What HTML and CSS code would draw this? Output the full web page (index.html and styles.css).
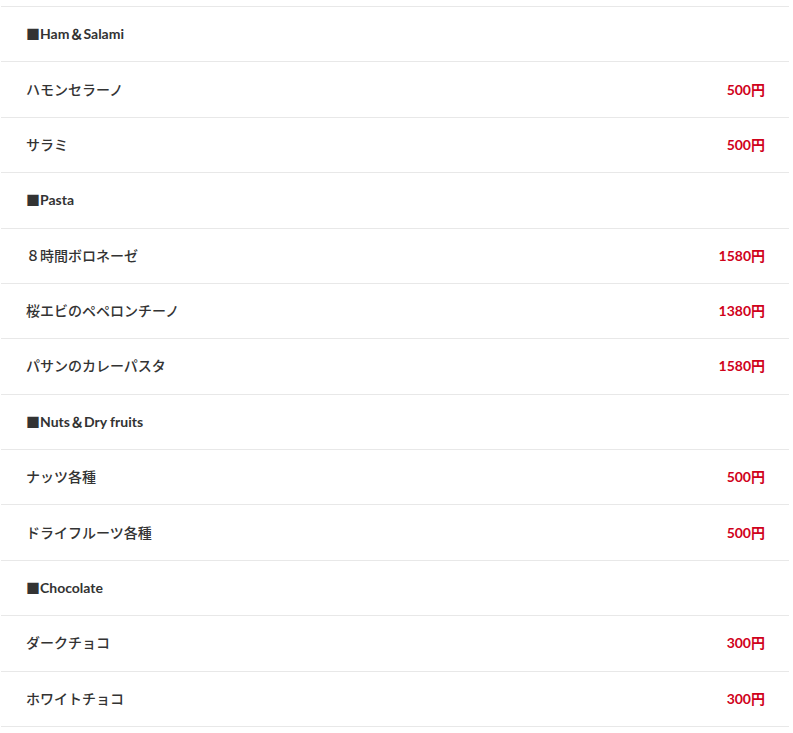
FILE: index.html
```html
<!DOCTYPE html>
<html lang="ja">
<head>
<meta charset="utf-8">
<link rel="stylesheet" href="styles.css">
</head>
<body>
<div class="menu">
  <div class="row head">■Ham＆Salami</div>
  <div class="row"><span class="name">ハモンセラーノ</span><span class="price">500円</span></div>
  <div class="row"><span class="name">サラミ</span><span class="price">500円</span></div>
  <div class="row head">■Pasta</div>
  <div class="row"><span class="name">８時間ボロネーゼ</span><span class="price">1580円</span></div>
  <div class="row"><span class="name">桜エビのペペロンチーノ</span><span class="price">1380円</span></div>
  <div class="row"><span class="name">パサンのカレーパスタ</span><span class="price">1580円</span></div>
  <div class="row head">■Nuts＆Dry fruits</div>
  <div class="row"><span class="name">ナッツ各種</span><span class="price">500円</span></div>
  <div class="row"><span class="name">ドライフルーツ各種</span><span class="price">500円</span></div>
  <div class="row head">■Chocolate</div>
  <div class="row"><span class="name">ダークチョコ</span><span class="price">300円</span></div>
  <div class="row"><span class="name">ホワイトチョコ</span><span class="price">300円</span></div>
</div>
</body>
</html>
```

FILE: styles.css
```css
html, body {
  margin: 0;
  padding: 0;
  background: #fff;
}
body {
  font-family: Lato, "Noto Sans CJK JP", sans-serif;
  color: #333;
}
.menu {
  margin: 6px 4px 0 1px;
  border-top: 1px solid #e8e8e8;
}
.row {
  box-sizing: border-box;
  height: 55.38px;
  border-bottom: 1px solid #e8e8e8;
  display: flex;
  align-items: center;
  justify-content: space-between;
  padding: 0 24px 2px 25px;
}
.head {
  font-size: 14px;
  font-weight: 700;
  color: #333;
}
.name {
  font-size: 14px;
  font-weight: 500;
  color: #333;
}
.price {
  font-size: 14px;
  font-weight: 700;
  color: #d0021b;
}
```
